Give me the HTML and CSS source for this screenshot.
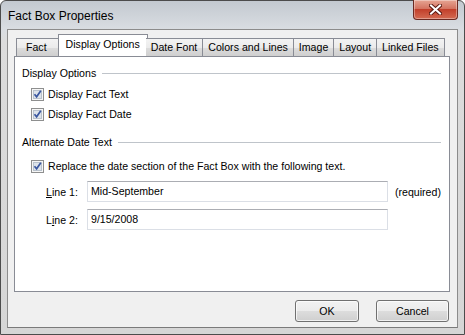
FILE: index.html
```html
<!DOCTYPE html>
<html lang="en">
<head>
    <meta charset="UTF-8">
    <title>Fact Box Properties</title>
    <link rel="stylesheet" href="styles.css">
</head>
<body>
    <div class="window">
        <div class="titlebar">
            <span class="title">Fact Box Properties</span>
            <button class="close" aria-label="Close">
                <svg width="13" height="11" viewBox="0 0 13 11">
                    <path d="M2 1.5 L11 9.5 M11 1.5 L2 9.5" stroke="#5a1a12" stroke-width="4" stroke-linecap="square"/>
                    <path d="M2 1.5 L11 9.5 M11 1.5 L2 9.5" stroke="#ffffff" stroke-width="2" stroke-linecap="square"/>
                </svg>
            </button>
        </div>
        <div class="client">
            <div class="tabs">
                <div class="tab">Fact</div>
                <div class="tab active">Display Options</div>
                <div class="tab">Date Font</div>
                <div class="tab">Colors and Lines</div>
                <div class="tab">Image</div>
                <div class="tab">Layout</div>
                <div class="tab">Linked Files</div>
            </div>
            <div class="panel">
                <div class="group-head first"><span>Display Options</span></div>
                <label class="check-row r1">
                    <svg class="cb" width="13" height="13" viewBox="0 0 13 13">
                        <rect x="0.5" y="0.5" width="12" height="12" fill="#f6f6f6" stroke="#8e8f8f"/>
                        <rect x="2.5" y="2.5" width="8" height="8" fill="#dde3ea" stroke="#b9c2cc"/>
                        <path d="M3.5 6.2 L5.6 8.8 L9.8 2.8" fill="none" stroke="#3a57a0" stroke-width="1.7"/>
                    </svg>
                    Display Fact Text
                </label>
                <label class="check-row r2">
                    <svg class="cb" width="13" height="13" viewBox="0 0 13 13">
                        <rect x="0.5" y="0.5" width="12" height="12" fill="#f6f6f6" stroke="#8e8f8f"/>
                        <rect x="2.5" y="2.5" width="8" height="8" fill="#dde3ea" stroke="#b9c2cc"/>
                        <path d="M3.5 6.2 L5.6 8.8 L9.8 2.8" fill="none" stroke="#3a57a0" stroke-width="1.7"/>
                    </svg>
                    Display Fact Date
                </label>
                <div class="group-head second"><span>Alternate Date Text</span></div>
                <label class="check-row r3">
                    <svg class="cb" width="13" height="13" viewBox="0 0 13 13">
                        <rect x="0.5" y="0.5" width="12" height="12" fill="#f6f6f6" stroke="#8e8f8f"/>
                        <rect x="2.5" y="2.5" width="8" height="8" fill="#dde3ea" stroke="#b9c2cc"/>
                        <path d="M3.5 6.2 L5.6 8.8 L9.8 2.8" fill="none" stroke="#3a57a0" stroke-width="1.7"/>
                    </svg>
                    Replace the date section of the Fact Box with the following text.
                </label>
                <div class="field-row f1">
                    <span class="field-label"><u>L</u>ine 1:</span>
                    <div class="textbox">Mid-September</div>
                    <span class="hint">(required)</span>
                </div>
                <div class="field-row f2">
                    <span class="field-label">L<u>i</u>ne 2:</span>
                    <div class="textbox">9/15/2008</div>
                </div>
            </div>
            <div class="buttons">
                <button class="btn ok">OK</button>
                <button class="btn cancel">Cancel</button>
            </div>
        </div>
    </div>
</body>
</html>
```
FILE: styles.css
```css
body {
    margin: 0;
    background: #ffffff;
    font-family: "Liberation Sans", Arial, sans-serif;
    font-size: 10.6px;
    color: #000;
}

.window {
    box-sizing: border-box;
    width: 465px;
    height: 335px;
    border: 1px solid #4c4c4c;
    border-radius: 6px 6px 0 0;
    padding: 0 6px 6px 6px;
    background: linear-gradient(#c3c9d0, #d9dde2 28px, #dcdcdc 40px, #d6d6d6);
    display: flex;
    flex-direction: column;
}

.titlebar {
    height: 28px;
    display: flex;
    justify-content: space-between;
}

.title {
    font-size: 12px;
    line-height: 12px;
    margin-top: 9px;
    margin-left: 1px;
}

.close {
    width: 45px;
    height: 20px;
    margin-top: -1px;
    padding: 0;
    border: 1px solid #6b2a22;
    border-top: none;
    border-radius: 0 0 4px 4px;
    background: linear-gradient(#e6a593, #d47461 45%, #c2402b 50%, #d46b52);
    box-shadow: inset 0 0 0 1px rgba(255, 255, 255, 0.35);
    display: flex;
    align-items: center;
    justify-content: center;
}

.client {
    flex: 1;
    border: 1px solid #8c8c8c;
    border-bottom-color: #7a7a7a;
    background: #f0f0f0;
    padding: 6px 7px 0 6px;
    display: flex;
    flex-direction: column;
}

.tabs {
    display: flex;
    height: 20px;
    padding-left: 2px;
    align-items: flex-end;
    position: relative;
    z-index: 1;
}

.tab {
    height: 17px;
    line-height: 17px;
    padding: 0 5px;
    border: 1px solid #898c95;
    border-bottom: none;
    border-left: none;
    background: linear-gradient(#f3f3f3, #ebebeb 50%, #dddddd 50%, #cfcfcf);
    white-space: nowrap;
}

.tab:first-child {
    border-left: 1px solid #898c95;
    padding: 0 12px 0 9px;
}

.tab.active {
    height: 21px;
    line-height: 18px;
    background: #ffffff;
    border-left: 1px solid #898c95;
    margin-left: -2px;
    margin-right: -2px;
    padding: 0 7px;
}

.tab.active + .tab {
    border-left: none;
}

.panel {
    box-sizing: border-box;
    height: 236px;
    border: 1px solid #898c95;
    background: #ffffff;
    padding: 10px 8px 0 7px;
    display: flex;
    flex-direction: column;
}

.group-head {
    display: flex;
    align-items: center;
    line-height: 13px;
}

.group-head::after {
    content: "";
    flex: 1;
    height: 1px;
    background: #bfc4ca;
    margin-left: 6px;
}

.group-head.second {
    margin-top: 15px;
}

.check-row {
    display: flex;
    align-items: center;
    gap: 4px;
    line-height: 13px;
    margin-left: 9px;
}

.check-row.r1 {
    margin-top: 8px;
}

.check-row.r2 {
    margin-top: 7px;
}

.check-row.r3 {
    margin-top: 11px;
}

.field-row {
    display: flex;
    align-items: center;
    margin-left: 24px;
}

.field-row.f1 {
    margin-top: 8px;
}

.field-row.f2 {
    margin-top: 7px;
}

.field-label {
    width: 41px;
}

.textbox {
    box-sizing: border-box;
    width: 301px;
    height: 21px;
    line-height: 19px;
    padding-left: 3px;
    border: 1px solid #dbdfe6;
    border-top-color: #abadb3;
    background: #ffffff;
}

.hint {
    margin-left: 7px;
}

.buttons {
    display: flex;
    justify-content: flex-end;
    gap: 17px;
    margin-top: 8px;
    padding-right: 1px;
}

.btn {
    height: 22px;
    padding: 0;
    font-family: "Liberation Sans", Arial, sans-serif;
    font-size: 10.6px;
    color: #000;
    border: 1px solid #707070;
    border-radius: 3px;
    background: linear-gradient(#f2f2f2, #ebebeb 50%, #dddddd 50%, #cfcfcf);
    box-shadow: inset 0 0 0 1px rgba(255, 255, 255, 0.7);
}

.btn.ok {
    width: 64px;
}

.btn.cancel {
    width: 73px;
}
```
